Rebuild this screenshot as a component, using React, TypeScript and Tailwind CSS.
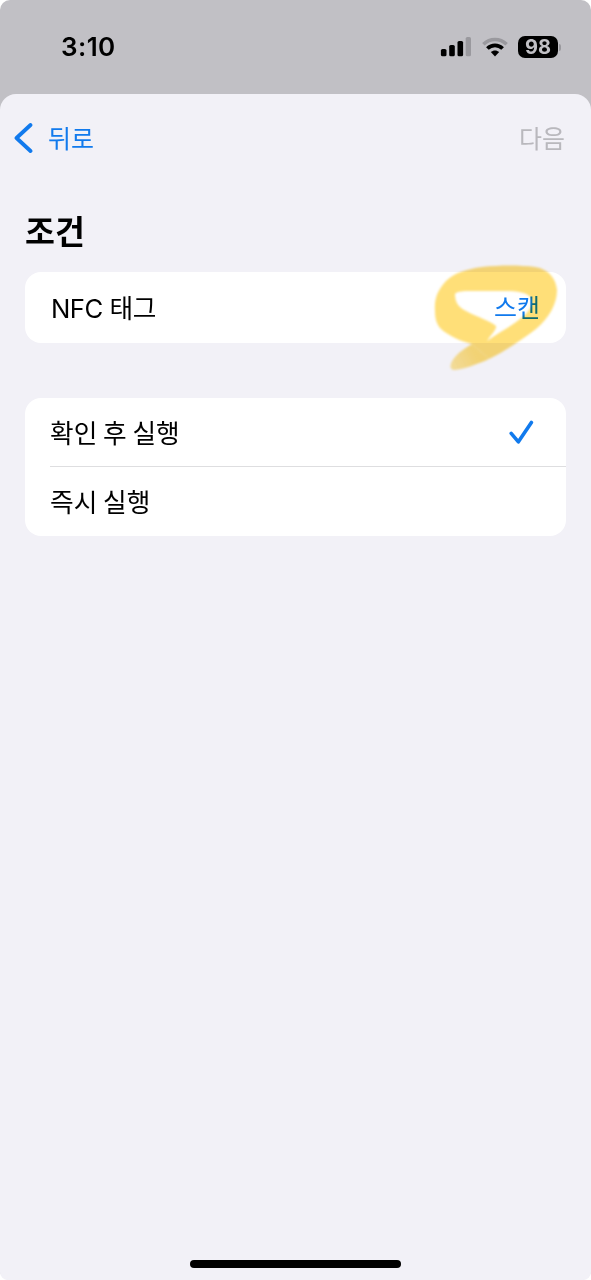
import type { ReactNode } from "react"

function StatusBar() {
  return (
    <div className="flex h-[94px] items-start justify-between pl-[61px] pr-[30px] pt-[34px]">
      <span className="font-['Inter'] text-[26px] font-semibold leading-[26px] tracking-[0.4px]">3:10</span>
      <div className="flex h-[26px] items-center">
        <svg width="31" height="20" viewBox="0 0 31 20" className="mr-[11px]">
          <rect x="0.9" y="12" width="5.6" height="7.3" rx="1.6" />
          <rect x="9.2" y="8" width="5.6" height="11.3" rx="1.6" />
          <rect x="17.5" y="4" width="5.6" height="15.3" rx="1.6" />
          <rect x="25.7" y="0" width="5.3" height="19.3" rx="1.6" fill="#9a999e" />
        </svg>
        <svg width="26" height="20" viewBox="0 0 26 20" className="mr-[10px]">
          <path d="M1.4 7.2C8 0.9 18 0.9 24.6 7.2" fill="none" stroke="#9a999e" strokeWidth="3.6" />
          <path d="M5.4 11.5C9.8 7.2 16.2 7.2 20.6 11.5" fill="none" stroke="#000" strokeWidth="3.8" />
          <path d="M8.8 15.1C11.2 12.9 14.8 12.9 17.2 15.1L13 19.4Z" />
        </svg>
        <div className="flex h-[22px] w-[40px] items-center justify-center rounded-[7px] bg-black font-['Inter'] text-[20px] font-bold leading-none text-[#c1c0c5]">
          98
        </div>
        <div className="ml-px h-[7px] w-[2px] rounded-r-full bg-[#9a999e]" />
      </div>
    </div>
  )
}

function Row({ label, children }: { label: string; children?: ReactNode }) {
  return (
    <div className="flex flex-1 items-center justify-between">
      <span>{label}</span>
      {children}
    </div>
  )
}

// marker stroke drawn around the scan button
function Highlight() {
  return (
    <svg
      width="132"
      height="116"
      viewBox="430 260 132 116"
      className="pointer-events-none absolute -top-[12px] left-[405px] mix-blend-multiply"
    >
      <defs>
        <linearGradient id="tail" gradientUnits="userSpaceOnUse" x1="450" y1="364" x2="474" y2="352">
          <stop offset="0" stopColor="#ffe07e" stopOpacity="0.75" />
          <stop offset="1" stopColor="#ffdf78" />
        </linearGradient>
        <filter id="soft" colorInterpolationFilters="sRGB">
          <feGaussianBlur stdDeviation="0.9" />
        </filter>
      </defs>
      <g filter="url(#soft)">
        <path
          fill="#ffdf78"
          fillRule="evenodd"
          d="M435 311C434 298 438 290 446 281C454 273 467 269 482 267C500 265 520 265 535 267C549 269 556 279 557 290C557 304 549 318 536 329C523 339 505 351 489 359L472 344C463 342 448 336 440 328C436 323 435 317 435 311Z
            M455 294C455 302 458 307 466 311C477 317 491 321 496 326C497 329 490 336 487 341C499 332 514 325 525 315C531 309 533 304 531 298C527 292 517 291 503 291L468 291C461 291 456 292 455 294Z"
        />
        <path
          fill="url(#tail)"
          d="M489 359C476 365 463 369 455 370C448 370 450 363 455 357C460 351 467 347 472 344Z"
        />
      </g>
    </svg>
  )
}

export default function App() {
  return (
    <div className="h-[1280px] w-[591px] overflow-hidden bg-white font-['Noto_Sans_CJK_KR',sans-serif] text-black">
      <div className="flex h-full flex-col rounded-[10px] bg-[#c1c0c5]">
        <StatusBar />
        <div className="flex flex-1 flex-col rounded-t-[16px] rounded-b-[8px] bg-[#f2f1f7]">
          <header className="flex h-[88px] items-center justify-between pl-[14px] pr-[26px] text-[25px]">
            <button className="flex items-center gap-[15px] text-[#117aed]">
              <svg width="19" height="30" viewBox="0 0 19 30" fill="none" stroke="currentColor" strokeWidth="3.8" strokeLinecap="round" strokeLinejoin="round">
                <path d="M16.5 2L2.5 15L16.5 28" />
              </svg>
              <span className="pb-px">뒤로</span>
            </button>
            <button className="pb-px text-[#b9b8bd]">다음</button>
          </header>

          <main className="px-[25px] text-[25.7px]">
            <h1 className="mt-[28px] h-[62px] text-[32.5px] font-bold leading-[40px]">조건</h1>
            <section className="relative flex h-[71px] rounded-[16px] bg-white px-[26px] pt-[3px] font-['Inter','Noto_Sans_CJK_KR',sans-serif] tracking-[-0.5px]">
              <Row label="NFC 태그">
                <button className="text-[25px] tracking-normal text-[#117aed]">스캔</button>
              </Row>
              <Highlight />
            </section>
            <section className="mt-[55px] flex h-[138px] flex-col rounded-[16px] bg-white pl-[25px]">
              <Row label="확인 후 실행">
                <svg width="25" height="25" viewBox="0 0 25 25" fill="none" stroke="#117aed" strokeWidth="3.6" strokeLinecap="round" strokeLinejoin="round" className="mr-[32px]">
                  <path d="M2.2 13.4L9.4 21.8L22.4 2.4" />
                </svg>
              </Row>
              <hr className="-mt-px border-[#dedee0]" />
              <Row label="즉시 실행" />
            </section>
          </main>

          <div className="mx-auto mb-[12px] mt-auto h-[8px] w-[211px] rounded-full bg-black" />
        </div>
      </div>
    </div>
  )
}
